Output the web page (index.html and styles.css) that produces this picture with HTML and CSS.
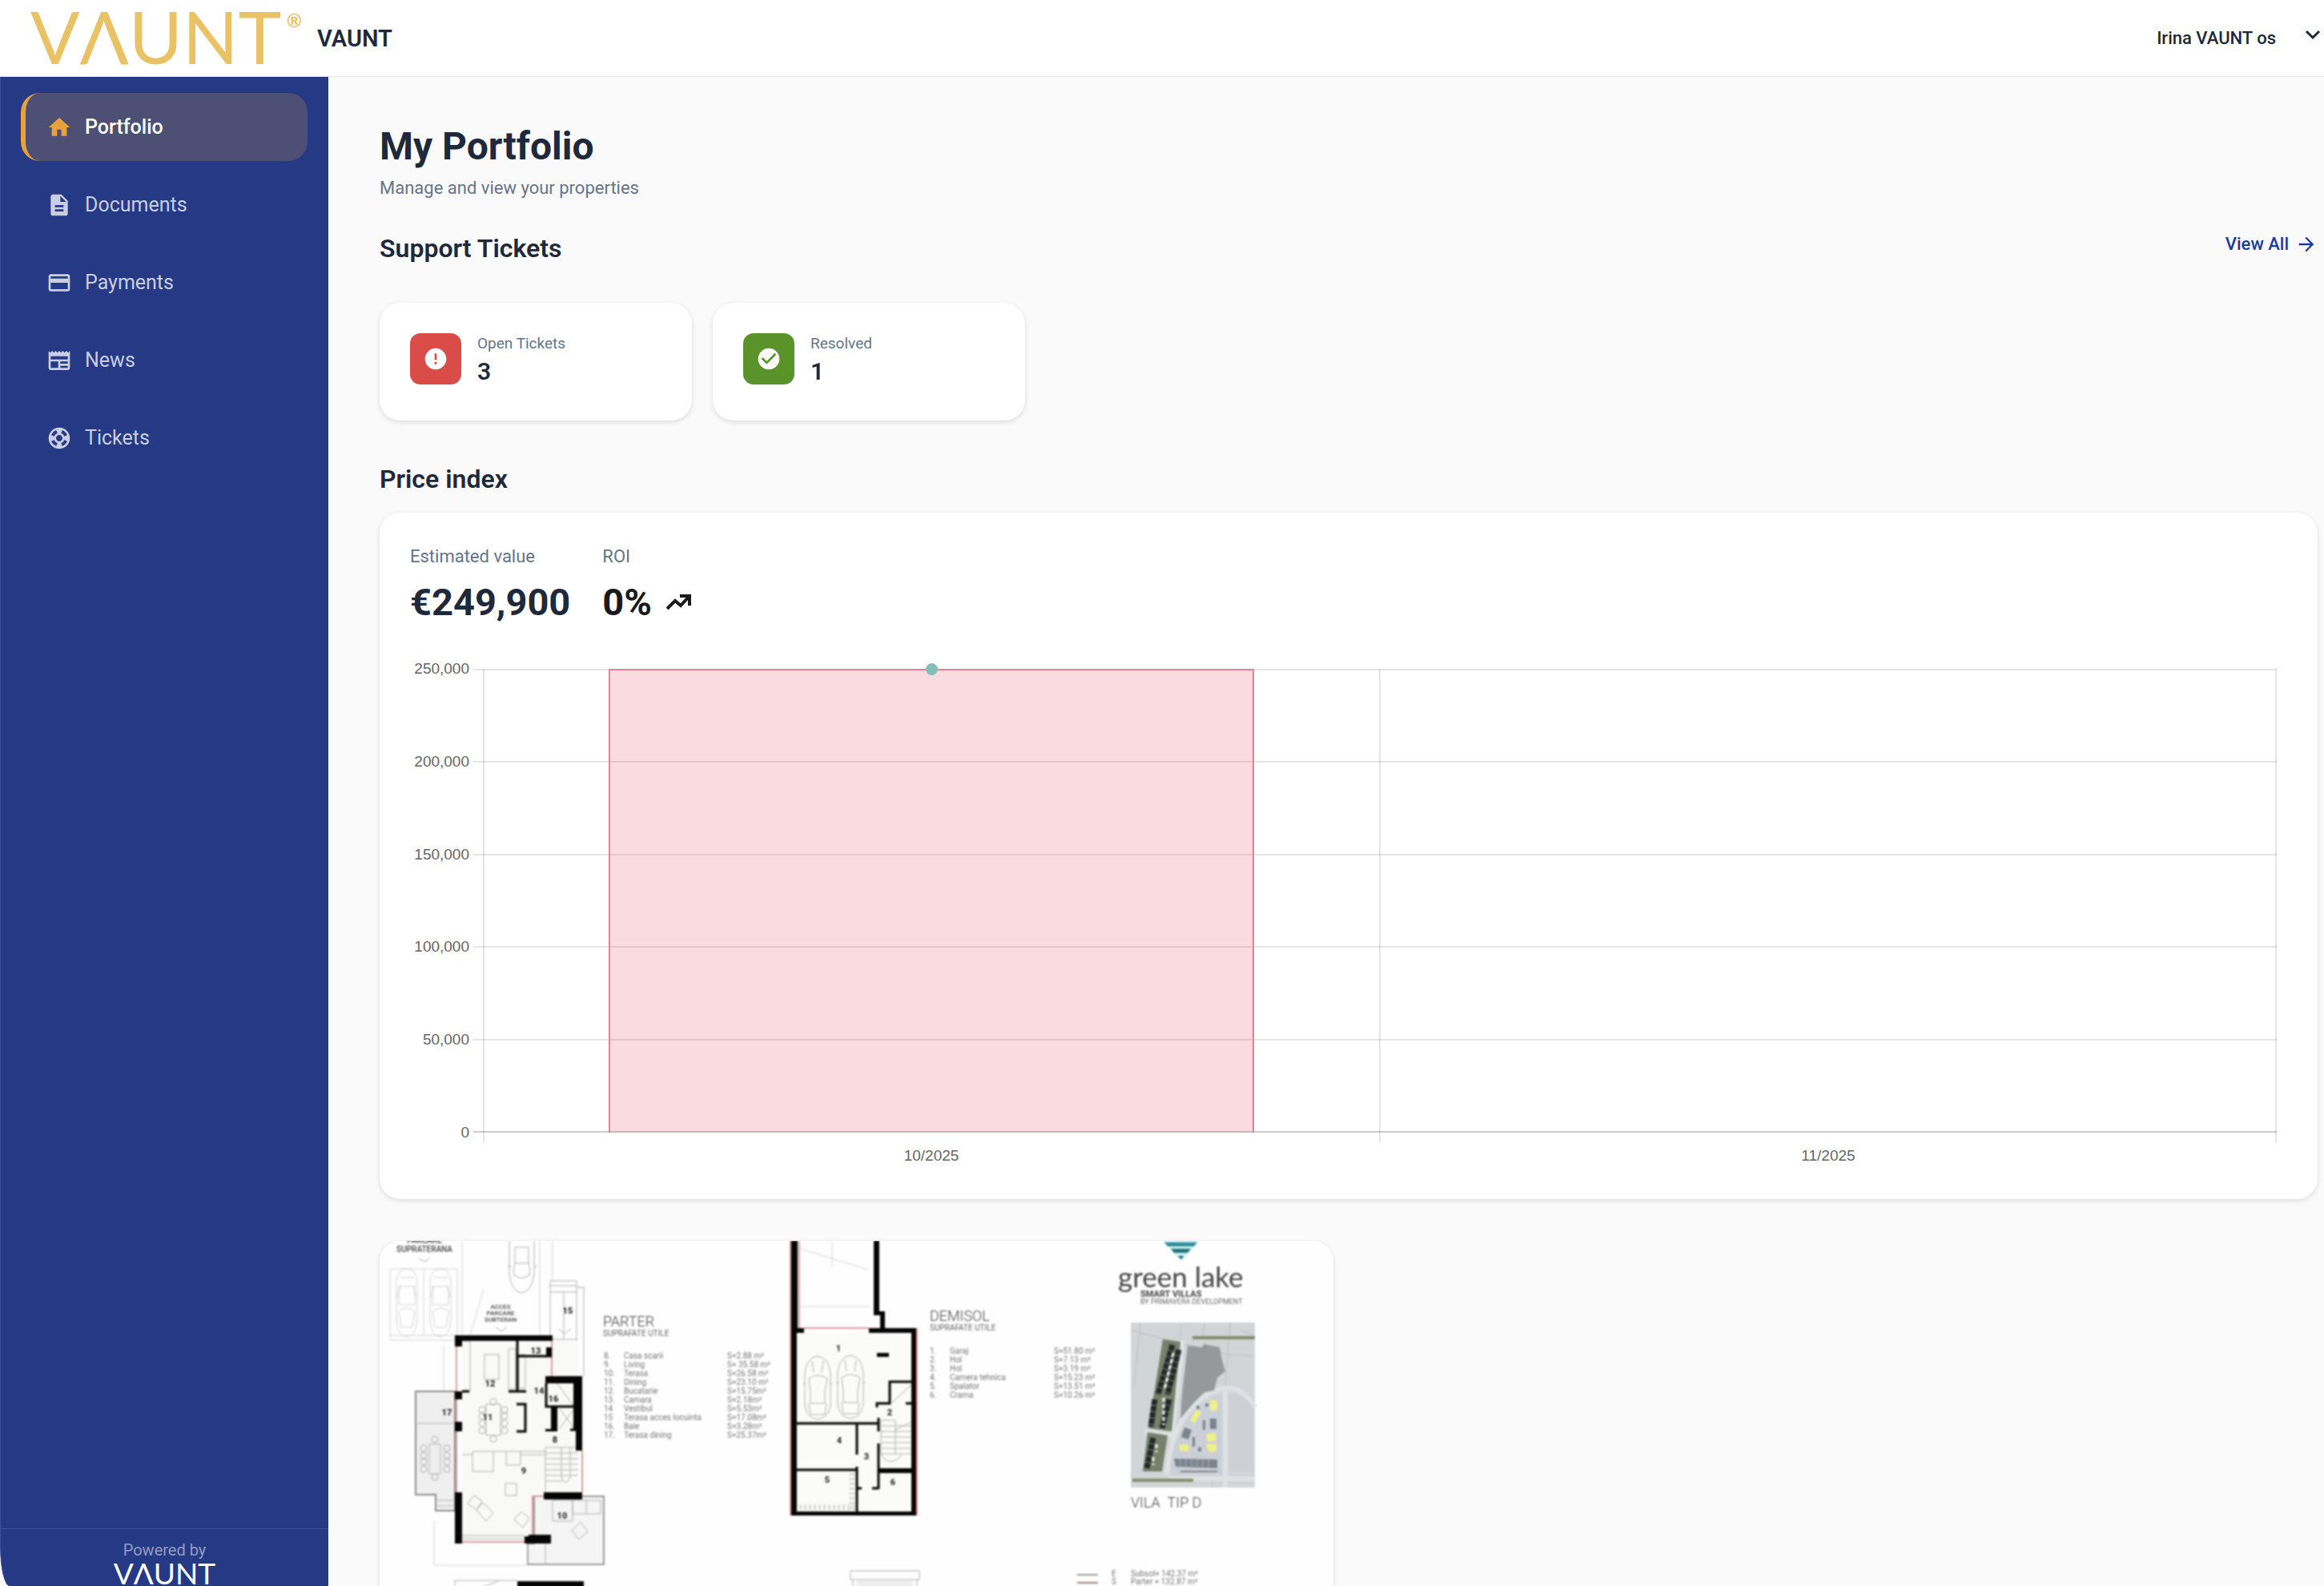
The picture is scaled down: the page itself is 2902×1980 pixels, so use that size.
FILE: index.html
```html
<!DOCTYPE html>
<html lang="en">
<head>
  <meta charset="UTF-8" />
  <meta name="viewport" content="width=device-width, initial-scale=1.0"/>
  <title>My Portfolio</title>
  <link rel="stylesheet" href="styles.css">
</head>
<body>
  <header class="topbar">
    <a class="brand" href="#">
      <svg class="brand-logo" viewBox="0 0 342 96" role="img" aria-label="VAUNT">
        <text x="0" y="80" class="logo-text">VΛUNT</text>
        <text x="320" y="34" class="logo-mark">®</text>
      </svg>
      <span class="brand-name">VAUNT</span>
    </a>
    <button type="button" class="user-menu">
      Irina VAUNT os
      <svg class="chevron" viewBox="0 0 20 20"><path d="M2 3l8 8 8-8" fill="none" stroke="currentColor" stroke-width="3"/></svg>
    </button>
  </header>

  <div class="shell">
    <aside class="sidebar">
      <nav class="nav">
        <a class="nav-item active" href="#">
          <svg class="icon" viewBox="0 0 24 24"><path d="M10 20v-6h4v6h5v-8h3L12 3 2 12h3v8z"/></svg>
          Portfolio
        </a>
        <a class="nav-item" href="#">
          <svg class="icon" viewBox="0 0 24 24"><path d="M14 2H6c-1.1 0-1.99.9-1.99 2L4 20c0 1.1.89 2 1.99 2H18c1.1 0 2-.9 2-2V8l-6-6zm2 16H8v-2h8v2zm0-4H8v-2h8v2zm-3-5V3.5L18.5 9H13z"/></svg>
          Documents
        </a>
        <a class="nav-item" href="#">
          <svg class="icon" viewBox="0 0 24 24"><path d="M20 4H4c-1.11 0-1.99.89-1.99 2L2 18c0 1.11.89 2 2 2h16c1.11 0 2-.89 2-2V6c0-1.11-.89-2-2-2zm0 14H4v-6h16v6zm0-10H4V6h16v2z"/></svg>
          Payments
        </a>
        <a class="nav-item" href="#">
          <svg class="icon" viewBox="0 0 24 24"><path d="M22 3l-1.67 1.67L18.67 3 17 4.67 15.33 3l-1.66 1.67L12 3l-1.67 1.67L8.67 3 7 4.67 5.33 3 3.67 4.67 2 3v16c0 1.1.9 2 2 2h16c1.1 0 2-.9 2-2V3zM11 19H4v-6h7v6zm9 0h-7v-2h7v2zm0-4h-7v-2h7v2zm0-4H4V8h16v3z"/></svg>
          News
        </a>
        <a class="nav-item" href="#">
          <svg class="icon" viewBox="0 0 24 24"><path d="M12 2C6.48 2 2 6.48 2 12s4.48 10 10 10 10-4.48 10-10S17.52 2 12 2zm7.46 7.12l-2.78 1.15c-.51-1.36-1.58-2.44-2.95-2.94l1.15-2.78c2.1.8 3.77 2.47 4.58 4.57zM12 15c-1.66 0-3-1.34-3-3s1.34-3 3-3 3 1.34 3 3-1.34 3-3 3zM9.13 4.54l1.17 2.78c-1.38.5-2.47 1.59-2.98 2.97L4.54 9.13c.81-2.11 2.48-3.78 4.59-4.59zM4.54 14.87l2.78-1.15c.51 1.38 1.59 2.46 2.97 2.96l-1.17 2.78c-2.1-.81-3.77-2.48-4.58-4.59zm10.34 4.59l-1.15-2.78c1.37-.51 2.45-1.59 2.95-2.97l2.78 1.17c-.81 2.1-2.48 3.77-4.58 4.58z"/></svg>
          Tickets
        </a>
      </nav>
      <div class="powered">
        <span>Powered by</span>
        <span class="powered-logo" aria-label="VAUNT">VΛUNT</span>
      </div>
    </aside>

    <main class="main">
      <h1>My Portfolio</h1>
      <p class="subtitle">Manage and view your properties</p>

      <div class="section-head">
        <h2>Support Tickets</h2>
        <a class="view-all" href="#">
          View All
          <svg class="arrow" viewBox="0 0 24 24"><path d="M12 4l-1.41 1.41L16.17 11H4v2h12.17l-5.58 5.59L12 20l8-8z"/></svg>
        </a>
      </div>

      <div class="tickets">
        <div class="card ticket">
          <div class="ticket-icon open">
            <svg class="icon" viewBox="0 0 24 24"><path d="M12 2C6.48 2 2 6.48 2 12s4.48 10 10 10 10-4.48 10-10S17.52 2 12 2zm1 15h-2v-2h2v2zm0-4h-2V7h2v6z"/></svg>
          </div>
          <div>
            <div class="ticket-label">Open Tickets</div>
            <div class="ticket-count">3</div>
          </div>
        </div>
        <div class="card ticket">
          <div class="ticket-icon resolved">
            <svg class="icon" viewBox="0 0 24 24"><path d="M12 2C6.48 2 2 6.48 2 12s4.48 10 10 10 10-4.48 10-10S17.52 2 12 2zm-2 15l-5-5 1.41-1.41L10 14.17l7.59-7.59L19 8l-9 9z"/></svg>
          </div>
          <div>
            <div class="ticket-label">Resolved</div>
            <div class="ticket-count">1</div>
          </div>
        </div>
      </div>

      <h2 class="price-title">Price index</h2>
      <section class="card price-card">
        <div class="stats">
          <div>
            <div class="stat-label">Estimated value</div>
            <div class="stat-value">€249,900</div>
          </div>
          <div>
            <div class="stat-label">ROI</div>
            <div class="stat-value roi">
              0%
              <svg class="trend" viewBox="0 0 34 24"><path d="M3 20l10-10 7 6L30 5M19 4h12v12" fill="none" stroke="currentColor" stroke-width="4"/></svg>
            </div>
          </div>
        </div>

        <div class="chart">
          <div class="y-axis">
            <span>250,000</span><span>200,000</span><span>150,000</span><span>100,000</span><span>50,000</span><span>0</span>
          </div>
          <div class="plot">
            <div class="bars">
              <div class="slot"><div class="bar" style="height: 99.96%"><i class="dot"></i></div></div>
              <div class="slot"></div>
            </div>
            <div class="h-lines"><i></i><i></i><i></i><i></i><i></i><i></i></div>
            <div class="v-lines"><i></i><i></i><i></i></div>
          </div>
          <div class="x-axis"><span>10/2025</span><span>11/2025</span></div>
        </div>
      </section>

      <div class="properties">
        <a class="card property" href="#" aria-label="Vila tip D">
          <svg class="plan" viewBox="0 0 1191 600">
            <rect width="1191" height="600" fill="#fefefe"/>
            <g class="soft">
              <!-- parking and driveway -->
              <g class="thin">
                <path d="M13 35H97V124H13zM55 35V118M13 118H97M103 0V118M216 0V50M130 60L113 118M200 0V118M80 130V188M68 350V405H185"/>
                <g id="car">
                  <path d="M21 50q1-14 13-15 12 1 13 15V98q-1 21-13 22-12-1-13-22z"/>
                  <path d="M26 46H43M24 57H44V80H24zM26 57L22 70M42 57L46 70M24 88Q34 80 44 88L41 108H27z"/>
                </g>
                <use href="#car" x="42"/>
              </g>
              <g class="mid">
                <path d="M162 0V42Q165 64 177 65 190 64 193 42V0M169 8H186V28H169zM169 28Q166 35 168 43 177 50 187 43 189 35 186 28M160 32h4M192 32h4"/>
                <path d="M49 22l7 4 7-4M145 108l7 5 7-5"/>
                <path d="M213 50H246V169H213zM246 58H255V169M213 56H246M213 64H246M213 123H246M213 130H246M213 137H246M213 146H246M230 64V123M223 110l8 6 8-6"/>
              </g>
              <g class="caption" text-anchor="middle">
                <text x="56" y="3">PARCARE</text><text x="56" y="14">SUPRATERANA</text>
                <text x="151" y="85" class="tiny">ACCES</text><text x="151" y="93" class="tiny">PARCARE</text><text x="151" y="101" class="tiny">SUBTERAN</text>
              </g>

              <!-- ground floor -->
              <path fill="#f9f9f8" d="M103 125H248V314H205V376H103z"/>
              <path fill="#efefef" stroke="#8c8c8c" stroke-width="2" d="M94 188H45V317H70V337H94z"/>
              <path fill="#f5f5f5" stroke="#999" stroke-width="2" d="M193 319H280V404H185V378H193z"/>
              <g class="mid">
                <path d="M45 228H94M70 324H94M70 331H94M62 254h14v37H62zM131 142H149V173H131zM133 204H151V243H133zM103 125H113V188M161 135h9v50h-9zM174 142v42h8v-42zM116 263H142V288H116zM142 263H176V280H158V263M103 267H116M176 263H207M176 267H207"/>
                <path d="M207 258H248M207 265H248M207 272H248M207 279H248M207 286H248M207 293H248M207 300H228M207 258V314M227 258V295Q232 308 238 295V258"/>
                <path d="M157 303H171V318H157zM216 324H241V350H216zM241 324H276V341H241zM258 324V341M185 378V404M207 378V404M222 178l20 28M225 210l18 24M243 210l-18 24"/>
                <path d="M110 328l8-10 10 7-7 11zM121 336l8-9 13 13-9 10zM168 348l9-10 10 8-8 12zM240 362l11-11 9 12-11 10zM103 368H181M103 372H181"/>
                <circle cx="55" cy="259" r="4"/><circle cx="55" cy="268" r="4"/><circle cx="55" cy="276" r="4"/><circle cx="55" cy="285" r="4"/>
                <circle cx="84" cy="259" r="4"/><circle cx="84" cy="268" r="4"/><circle cx="84" cy="276" r="4"/><circle cx="84" cy="285" r="4"/>
                <circle cx="69" cy="248" r="4"/><circle cx="69" cy="295" r="4"/><circle cx="142" cy="201" r="4"/><circle cx="142" cy="247" r="4"/>
                <circle cx="128" cy="211" r="4"/><circle cx="128" cy="219" r="4"/><circle cx="128" cy="228" r="4"/><circle cx="128" cy="237" r="4"/>
                <circle cx="156" cy="211" r="4"/><circle cx="156" cy="219" r="4"/><circle cx="156" cy="228" r="4"/><circle cx="156" cy="237" r="4"/>
              </g>
              <path class="red" d="M96 132V314M215 125V169M253 262V314M205 319H191V367M103 376H181"/>
              <path class="wall" d="M94 118H216V125H103V132H94zM208 133h7v11h-7zM94 188h9v10h-9zM94 226h9v12h-9zM94 314h9v64h-9zM207 169H253V262H245V236H242V178H207zM214 206h8v32h-15v-3h7zM205 314h48v9h-48zM181 369h5v-2h28v11h-33zM172 425h83v175h-83z"/>
              <path fill="none" stroke="#050505" stroke-width="3" d="M172 125V188M172 144H215M161 188H183M103 188h9M208 178V207H242M171 204H182V238H171M238 236h7"/>
              <path class="mid" d="M94 600V424H172M110 440l40-16"/>
              <g class="pins" text-anchor="middle">
                <text x="235" y="91">15</text><text x="195" y="141">13</text><text x="138" y="182">12</text><text x="199" y="191">14</text><text x="217" y="201">16</text>
                <text x="135" y="224">11</text><text x="219" y="252">8</text><text x="180" y="291">9</text><text x="84" y="218">17</text><text x="228" y="347">10</text>
              </g>

              <!-- basement -->
              <g class="thin">
                <path d="M526 10l84 26M565 0V32M526 82H612"/>
              </g>
              <path fill="#fbfbf9" d="M522 115H664V338H522z"/>
              <g class="mid">
                <g id="sedan">
                  <path d="M531 165Q533 146 547 144 561 146 563 165V206Q560 222 547 223 534 222 531 206zM536 172Q547 164 559 172L556 188V203H538V188zM540 150l2 14M554 150l-2 14M529 178h3M562 178h3M536 203l2 14h18l2-14"/>
                </g>
                <use href="#sedan" x="41" y="-1"/>
                <path d="M626 224H644M626 231H664M626 238H664M626 245H664M626 252H664M626 259H664M626 266H664M644 224V266M626 224V266Q636 284 652 268M644 236l20-10M640 202l24-22"/>
              </g>
              <path d="M524 333H594M590 290V336" fill="none" stroke="#dadada" stroke-width="7" stroke-dasharray="3 3"/>
              <path class="red" d="M513 0V343M530 109H611M524 0V109M671 109V343"/>
              <path class="wall" d="M514 0h8v109h8v6h-9v223h143V115h-53v-6h14V93h-8V0h7v88h7v21h39v234H514zM621 140h15v5h-15zM623 284h41v6h-41z"/>
              <path fill="none" stroke="#050505" stroke-width="3" d="M520 228H623M623 221V238M623 253V310M596 229V267M596 282V343M520 286H596M596 309h6M615 309h8M664 176H637V203H621V208M657 203h7"/>
              <g class="pins" text-anchor="middle">
                <text x="573" y="138">1</text><text x="637" y="218">2</text><text x="574" y="253">4</text><text x="608" y="273">3</text><text x="559" y="302">5</text><text x="641" y="305">6</text>
              </g>
              <path class="mid" d="M588 412H674V423H588zM591 423V600M671 423V600"/>
              <path fill="#eee" d="M596 424h70v176h-70z"/>

              <!-- area tables -->
              <text x="279" y="107" class="plan-title">PARTER</text>
              <text x="279" y="119" class="plan-sub">SUPRAFATE UTILE</text>
              <g class="rows">
                <text x="280" y="147">8.</text><text x="305" y="147">Casa scarii</text><text x="434" y="147">S=2.88 m²</text>
                <text x="280" y="158">9.</text><text x="305" y="158">Living</text><text x="434" y="158">S= 35.58 m²</text>
                <text x="280" y="169">10.</text><text x="305" y="169">Terasa</text><text x="434" y="169">S=26.58 m²</text>
                <text x="280" y="180">11.</text><text x="305" y="180">Dining</text><text x="434" y="180">S=23.10 m²</text>
                <text x="280" y="191">12.</text><text x="305" y="191">Bucatarie</text><text x="434" y="191">S=15.75m²</text>
                <text x="280" y="202">13.</text><text x="305" y="202">Camara</text><text x="434" y="202">S=2.18m²</text>
                <text x="280" y="213">14</text><text x="305" y="213">Vestibul</text><text x="434" y="213">S=5.53m²</text>
                <text x="280" y="224">15</text><text x="305" y="224">Terasa acces locuinta</text><text x="434" y="224">S=17.08m²</text>
                <text x="280" y="235">16.</text><text x="305" y="235">Baie</text><text x="434" y="235">S=3.28m²</text>
                <text x="280" y="246">17.</text><text x="305" y="246">Terasa dining</text><text x="434" y="246">S=25.37m²</text>
              </g>
              <text x="687" y="100" class="plan-title">DEMISOL</text>
              <text x="687" y="112" class="plan-sub">SUPRAFATE UTILE</text>
              <g class="rows">
                <text x="687" y="141">1.</text><text x="712" y="141">Garaj</text><text x="842" y="141">S=51.80 m²</text>
                <text x="687" y="152">2.</text><text x="712" y="152">Hol</text><text x="842" y="152">S=7.13 m²</text>
                <text x="687" y="163">3.</text><text x="712" y="163">Hol</text><text x="842" y="163">S=3.19 m²</text>
                <text x="687" y="174">4.</text><text x="712" y="174">Camera tehnica</text><text x="842" y="174">S=15.23 m²</text>
                <text x="687" y="185">5.</text><text x="712" y="185">Spalator</text><text x="842" y="185">S=13.51 m²</text>
                <text x="687" y="196">6.</text><text x="712" y="196">Crama</text><text x="842" y="196">S=10.26 m²</text>
                <text x="914" y="419">E</text><text x="938" y="419">Subsol= 142.37 m²</text>
                <text x="914" y="429">S</text><text x="938" y="429">Parter = 132.87 m²</text>
              </g>
              <path d="M871 417h26" stroke="#999" stroke-width="2"/>
              <path d="M871 427h26" stroke="#a87878" stroke-width="2"/>

              <!-- developer logo -->
              <path fill="#c9f3f6" d="M978 0H1023L1001 26z"/>
              <path fill="#318f97" d="M980 2H1021L1017 7H984z"/>
              <path fill="#26717b" d="M988 10H1013L1009 15H992z"/>
              <path fill="#175560" d="M997 19H1004L1001 23z"/>
              <text x="922" y="58" class="lake">green lake</text>
              <text x="950" y="70" class="villas">SMART VILLAS</text>
              <text x="950" y="79" class="by">BY PRIMAVERA DEVELOPMENT</text>

              <!-- site map -->
              <path fill="#d2d5d7" d="M938 102h155v206H938z"/>
              <g fill="none" stroke="#bcc0c3" stroke-width="1">
                <path d="M938 112l120 30 35 2M1030 102l-2 18M1062 102l-6 80M1000 102v22M950 102l-8 80M1075 112l18 6M1015 296l-8 12M1040 300v8"/>
              </g>
              <g fill="none" stroke="#dfe2e4" stroke-width="6">
                <path d="M983 292Q992 200 1054 184 1078 182 1093 208M1056 184V308M955 238l36 6M1003 124l-14 118M985 297H1093"/>
              </g>
              <path fill="#cdd1d6" d="M1060 190Q1080 190 1092 210V288H1060z"/>
              <path fill="#cbd0d8" d="M987 280Q996 214 1052 191V292H990z"/>
              <path fill="#76806a" d="M978 123L1000 126 989 238 960 234zM959 239L984 243 977 288 953 288z"/>
              <path d="M990 130L972 192M998 136L984 192M968 198L963 232M986 198L977 234M966 246L958 284" fill="none" stroke="#22282a" stroke-width="7" stroke-dasharray="7 1"/>
              <path d="M991 140L980 186M979 196v34M970 254v10M966 270v10" fill="none" stroke="#f4f4f4" stroke-width="3" stroke-dasharray="5 3"/>
              <path fill="#96999b" d="M1009 131l18 2 2-4 20 4 3 16 4 14-10 8-4 16-12 2-14 14-16 19 2-30z"/>
              <path d="M1015 121H1093M940 299H1016" stroke="#858c6c" stroke-width="4"/>
              <path fill="#eef08a" d="M1037 199h9v13h-9zM1020 211l6 3-8 14-6-4zM1032 241l12-1 1 9-11 2zM1032 254l13-1v10l-10 1zM999 254l12 1-1 8-11-1z"/>
              <path fill="#7c838c" d="M1037 222h8v13h-8zM1005 233l9 3-4 12-9-3zM992 272l54 1v11l-52-2zM1000 287h46v2h-46zM1020 206h4v4h-4zM1031 203h4v4h-4zM1028 224h3v12h-3zM1015 245h3v12h-3zM1022 258h4v5h-4z"/>
              <path d="M1000 272v12M1007 272v12M1014 272v12M1021 272v12M1028 272v12M1035 272v12" stroke="#aab0b8"/>
              <text x="938" y="333" class="plan-title">VILA &#160;TIP D</text>
            </g>
          </svg>
        </a>
      </div>
    </main>
  </div>
</body>
</html>
```

FILE: styles.css
```css
:root {
  --navy: #263984;
  --gold: #e8c264;
  --orange: #e9a23b;
  --text: #1e293b;
  --muted: #64748b;
  --link: #1e3a9f;
  --page: #fafafa;
}

* {
  box-sizing: border-box;
  margin: 0;
  padding: 0;
}

body {
  font-family: Roboto, sans-serif;
  color: var(--text);
  background: var(--page);
  height: 100vh;
  display: flex;
  flex-direction: column;
  overflow: hidden;
}

a {
  color: inherit;
  text-decoration: none;
}

.topbar {
  height: 96px;
  flex-shrink: 0;
  display: flex;
  align-items: center;
  justify-content: space-between;
  padding: 0 4px 0 38px;
  background: #fff;
  border-bottom: 1px solid #e2e4ec;
}

.brand {
  display: flex;
  align-items: center;
  gap: 16px;
}

.brand-logo {
  width: 342px;
  height: 96px;
  overflow: visible;
}

.logo-text {
  font-family: Lato, sans-serif;
  font-size: 91px;
  fill: var(--gold);
}

.logo-mark {
  font-family: Lato, sans-serif;
  font-size: 23px;
  font-weight: 700;
  fill: var(--gold);
}

.brand-name {
  font-size: 29px;
  font-weight: 600;
}

.user-menu {
  display: flex;
  align-items: center;
  gap: 36px;
  border: none;
  background: none;
  font: 500 22px Roboto, sans-serif;
  color: var(--text);
  cursor: pointer;
}

.chevron {
  width: 20px;
  height: 20px;
  margin-bottom: 4px;
}

.shell {
  flex: 1;
  min-height: 0;
  display: flex;
}

.sidebar {
  width: 410px;
  flex-shrink: 0;
  display: flex;
  flex-direction: column;
  background: var(--navy);
  border-left: 1px solid #3f5093;
  border-bottom-left-radius: 12px 50px;
}

.nav {
  flex: 1;
  display: flex;
  flex-direction: column;
  gap: 12px;
  padding: 20px 26px 0 25px;
}

.nav-item {
  height: 85px;
  display: flex;
  align-items: center;
  gap: 16px;
  padding-left: 26px;
  border-left: 6px solid transparent;
  border-radius: 24px;
  font-size: 25px;
  color: #c9cee2;
}

.nav-item.active {
  background: #4e4f75;
  border-left-color: var(--orange);
  color: #fff;
  font-weight: 500;
}

.nav-item.active .icon {
  color: var(--orange);
}

.icon {
  width: 32px;
  height: 32px;
  fill: currentColor;
}

.powered {
  height: 72px;
  display: flex;
  flex-direction: column;
  align-items: center;
  padding-top: 14px;
  border-top: 1px solid #415293;
  font-size: 20px;
  line-height: 24px;
  color: #939cc2;
}

.powered-logo {
  font-family: Lato, sans-serif;
  font-size: 37px;
  line-height: 34px;
  color: #fff;
}

.main {
  flex: 1;
  min-width: 0;
  overflow: hidden;
  padding: 57px 8px 0 64px;
}

h1 {
  font-size: 48px;
  line-height: 60px;
  font-weight: 700;
}

h2 {
  font-size: 32px;
  line-height: 40px;
  font-weight: 600;
}

.subtitle {
  font-size: 22px;
  line-height: 28px;
  margin-top: 8px;
  color: var(--muted);
}

.section-head {
  display: flex;
  align-items: flex-start;
  justify-content: space-between;
  margin-top: 41px;
}

.view-all {
  display: flex;
  align-items: center;
  gap: 8px;
  font-size: 22px;
  line-height: 30px;
  font-weight: 500;
  color: var(--link);
}

.arrow {
  width: 28px;
  height: 28px;
  fill: currentColor;
}

.card {
  background: #fff;
  border-radius: 26px;
  box-shadow: 0 2px 6px rgba(0, 0, 0, 0.12);
}

.tickets {
  display: flex;
  gap: 26px;
  margin-top: 48px;
}

.ticket {
  width: 390px;
  height: 147px;
  display: flex;
  gap: 20px;
  padding: 38px;
}

.ticket-icon {
  width: 64px;
  height: 64px;
  display: flex;
  align-items: center;
  justify-content: center;
  border-radius: 13px;
  color: #fff;
}

.ticket-icon.open {
  background: #d94c47;
}

.ticket-icon.resolved {
  background: #5b932b;
}

.ticket-label {
  font-size: 19px;
  line-height: 26px;
  color: var(--muted);
}

.ticket-count {
  font-size: 30px;
  line-height: 44px;
  font-weight: 600;
}

.price-title {
  margin-top: 53px;
}

.price-card {
  margin-top: 22px;
  padding: 38px 51px 38px 38px;
}

.stats {
  display: flex;
  gap: 40px;
}

.stat-label {
  font-size: 22px;
  line-height: 34px;
  color: var(--muted);
}

.stat-value {
  font-size: 47px;
  line-height: 60px;
  font-weight: 700;
  margin-top: 10px;
}

.stat-value.roi {
  display: flex;
  align-items: center;
  gap: 16px;
  color: #1a1a1a;
}

.trend {
  width: 34px;
  height: 24px;
}

/* chart: y labels | plot, x labels below the plot */
.chart {
  display: grid;
  grid-template-columns: 74px 1fr;
  column-gap: 5px;
  margin-top: 53px;
  font-family: "Liberation Sans", Arial, sans-serif;
  font-size: 19px;
  line-height: 20px;
  color: #666;
}

.y-axis {
  display: flex;
  flex-direction: column;
  justify-content: space-between;
  align-items: flex-end;
  margin: -10px 0;
}

.plot {
  height: 579px;
  display: grid;
}

.plot > div {
  grid-area: 1 / 1;
  display: flex;
  justify-content: space-between;
}

.h-lines {
  flex-direction: column;
}

.h-lines i {
  height: 2px;
  background: rgba(0, 0, 0, 0.1);
}

.h-lines i:last-child {
  background: rgba(0, 0, 0, 0.2);
}

.v-lines {
  margin: 0 0 -12px 12px;
}

.v-lines i {
  width: 2px;
  background: rgba(0, 0, 0, 0.1);
}

.plot .bars {
  margin-left: 12px;
}

.slot {
  flex: 1;
  display: flex;
  align-items: flex-end;
  justify-content: center;
}

.bar {
  position: relative;
  width: 72%;
  background: rgba(225, 75, 100, 0.2);
  border: 2px solid #ef7f95;
  border-bottom: none;
}

.dot {
  position: absolute;
  top: -9px;
  left: calc(50% - 7px);
  width: 15px;
  height: 15px;
  border-radius: 50%;
  background: #80c0b9;
}

.x-axis {
  grid-column: 2;
  display: flex;
  margin: 19px 0 6px 12px;
}

.x-axis span {
  flex: 1;
  text-align: center;
}

.properties {
  display: grid;
  grid-template-columns: 1fr 1fr;
  gap: 38px;
  margin-top: 52px;
}

.property {
  overflow: hidden;
}

.plan {
  display: block;
  width: 100%;
}

.soft {
  filter: blur(1px);
}

.thin {
  fill: none;
  stroke: #d4d4d4;
}

.mid {
  fill: none;
  stroke: #b0b0b0;
}

.wall {
  fill: #050505;
}

.red {
  fill: none;
  stroke: #d99aa2;
  stroke-width: 2;
}

.pins {
  font-size: 11px;
  font-weight: 900;
  fill: #333;
}

.caption {
  font-size: 10px;
  font-weight: 500;
  fill: #444;
}

.tiny {
  font-size: 8px;
}

.plan-title {
  font-size: 18px;
  font-weight: 300;
  fill: #444;
}

.plan-sub {
  font-size: 10px;
  fill: #666;
}

.rows {
  font-size: 10px;
  fill: #777;
}

.lake {
  font-family: Lato, sans-serif;
  font-size: 35px;
  fill: #444;
}

.villas {
  font-size: 11px;
  font-weight: 700;
  fill: #444;
}

.by {
  font-size: 9px;
  fill: #666;
}
```
